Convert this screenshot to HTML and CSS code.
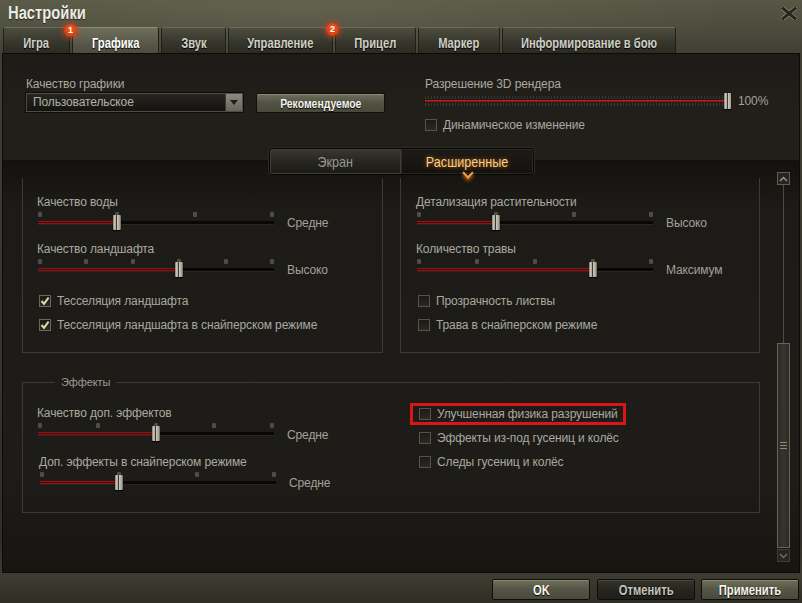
FILE: index.html
```html
<!DOCTYPE html>
<html lang="ru">
<head>
<meta charset="utf-8">
<title>Настройки</title>
<link rel="stylesheet" href="styles.css">
</head>
<body>
<div class="window">
  <header class="titlebar">
    <h1 class="title"><span class="cn">Настройки</span></h1>
    <button class="close" aria-label="Закрыть">
      <svg width="16" height="13" viewBox="0 0 16 13">
        <path d="M2 1.5 L14 11.5 M14 1.5 L2 11.5" stroke="#9a9a8a" stroke-width="4.2" stroke-linecap="square"/>
        <path d="M2 1.5 L14 11.5 M14 1.5 L2 11.5" stroke="#26261f" stroke-width="3" stroke-linecap="square"/>
      </svg>
    </button>
  </header>
  <nav class="tabs">
    <div class="tab t1"><span class="cn">Игра</span><span class="badge">1</span></div>
    <div class="tab t2 active"><span class="cn">Графика</span></div>
    <div class="tab t3"><span class="cn">Звук</span></div>
    <div class="tab t4"><span class="cn">Управление</span><span class="badge">2</span></div>
    <div class="tab t5"><span class="cn">Прицел</span></div>
    <div class="tab t6"><span class="cn">Маркер</span></div>
    <div class="tab t7"><span class="cn">Информирование в бою</span></div>
  </nav>

  <main class="panel">
    <section class="top">
      <div class="top-left">
        <div class="label">Качество графики</div>
        <div class="select-row">
          <div class="select">Пользовательское<span class="select-arrow"></span></div>
          <button class="btn btn-small"><span class="cn">Рекомендуемое</span></button>
        </div>
      </div>
      <div class="top-right">
        <div class="label">Разрешение 3D рендера</div>
        <div class="render-row">
          <div class="render-slider">
            <span class="render-ticks up"></span>
            <span class="render-track"></span>
            <span class="render-ticks down"></span>
            <span class="thumb render-thumb"></span>
          </div>
          <span class="value">100%</span>
        </div>
        <label class="check dyn"><span class="cb"></span>Динамическое изменение</label>
      </div>
    </section>

    <div class="switch-row">
      <div class="switch">
        <span class="seg"><span class="cn">Экран</span></span>
        <span class="seg on"><span class="cn">Расширенные</span></span>
      </div>
    </div>

    <div class="scroll">
      <div class="scroll-content">
        <div class="grid2">
          <div class="box box-l">
            <div class="group">
              <div class="label">Качество воды</div>
              <div class="slider-row">
                <div class="slider" style="--p:0.3333">
                  <span class="ticks"><i></i><i></i><i></i><i></i></span>
                  <span class="track"></span><span class="fill"></span><span class="thumb"></span>
                </div>
                <span class="value">Средне</span>
              </div>
            </div>
            <div class="group">
              <div class="label">Качество ландшафта</div>
              <div class="slider-row">
                <div class="slider" style="--p:0.6">
                  <span class="ticks"><i></i><i></i><i></i><i></i><i></i><i></i></span>
                  <span class="track"></span><span class="fill"></span><span class="thumb"></span>
                </div>
                <span class="value">Высоко</span>
              </div>
            </div>
            <div class="checks">
              <label class="check"><span class="cb on"><svg width="10" height="10" viewBox="0 0 10 10"><path d="M1.5 5 L4 7.8 L8.6 1.6" fill="none" stroke="#e2d7a8" stroke-width="2"/></svg></span>Тесселяция ландшафта</label>
              <label class="check"><span class="cb on"><svg width="10" height="10" viewBox="0 0 10 10"><path d="M1.5 5 L4 7.8 L8.6 1.6" fill="none" stroke="#e2d7a8" stroke-width="2"/></svg></span>Тесселяция ландшафта в снайперском режиме</label>
            </div>
          </div>
          <div class="box box-r">
            <div class="group">
              <div class="label">Детализация растительности</div>
              <div class="slider-row">
                <div class="slider" style="--p:0.3333">
                  <span class="ticks"><i></i><i></i><i></i><i></i></span>
                  <span class="track"></span><span class="fill"></span><span class="thumb"></span>
                </div>
                <span class="value">Высоко</span>
              </div>
            </div>
            <div class="group">
              <div class="label">Количество травы</div>
              <div class="slider-row">
                <div class="slider" style="--p:0.75">
                  <span class="ticks"><i></i><i></i><i></i><i></i><i></i></span>
                  <span class="track"></span><span class="fill"></span><span class="thumb"></span>
                </div>
                <span class="value">Максимум</span>
              </div>
            </div>
            <div class="checks">
              <label class="check"><span class="cb"></span>Прозрачность листвы</label>
              <label class="check"><span class="cb"></span>Трава в снайперском режиме</label>
            </div>
          </div>
        </div>

        <fieldset class="box effects">
          <legend>Эффекты</legend>
          <div class="effects-grid">
            <div class="effects-left">
              <div class="group">
                <div class="label">Качество доп. эффектов</div>
                <div class="slider-row">
                  <div class="slider" style="--p:0.5">
                    <span class="ticks"><i></i><i></i><i></i><i></i><i></i></span>
                    <span class="track"></span><span class="fill"></span><span class="thumb"></span>
                  </div>
                  <span class="value">Средне</span>
                </div>
              </div>
              <div class="group shifted">
                <div class="label">Доп. эффекты в снайперском режиме</div>
                <div class="slider-row">
                  <div class="slider" style="--p:0.3333">
                    <span class="ticks"><i></i><i></i><i></i><i></i></span>
                    <span class="track"></span><span class="fill"></span><span class="thumb"></span>
                  </div>
                  <span class="value">Средне</span>
                </div>
              </div>
            </div>
            <div class="checks effects-checks">
              <label class="check highlight"><span class="cb"></span>Улучшенная физика разрушений</label>
              <label class="check"><span class="cb"></span>Эффекты из-под гусениц и колёс</label>
              <label class="check"><span class="cb"></span>Следы гусениц и колёс</label>
            </div>
          </div>
        </fieldset>
      </div>

      <div class="scrollbar">
        <span class="sb-btn"><svg width="9" height="6" viewBox="0 0 9 6"><path d="M1 5 L4.5 1.5 L8 5" fill="none" stroke="#9a9a8c" stroke-width="1.4"/></svg></span>
        <span class="sb-line"></span>
        <span class="sb-thumb"><span class="grip"></span></span>
        <span class="sb-btn down"><svg width="9" height="6" viewBox="0 0 9 6"><path d="M1 1 L4.5 4.5 L8 1" fill="none" stroke="#6e6e62" stroke-width="1.4"/></svg></span>
      </div>
    </div>
  </main>

  <footer class="footer">
    <button class="btn btn-main"><span class="cn">OK</span></button>
    <button class="btn btn-dark"><span class="cn">Отменить</span></button>
    <button class="btn btn-main"><span class="cn">Применить</span></button>
  </footer>
</div>
</body>
</html>
```

FILE: styles.css
```css
* { box-sizing: border-box; }
html, body { margin: 0; padding: 0; }
body {
  width: 802px;
  height: 603px;
  overflow: hidden;
  background: #3b3b30;
  font-family: "Liberation Sans", Arial, sans-serif;
  font-size: 12px;
  letter-spacing: -0.12px;
  color: #a9a9a1;
}
.cn {
  display: inline-block;
  transform: scaleX(0.8);
  white-space: nowrap;
  letter-spacing: 0;
}
.window {
  width: 802px;
  height: 603px;
  display: flex;
  flex-direction: column;
  background:
    radial-gradient(ellipse 420px 60px at 300px 10px, rgba(120,120,95,0.35), rgba(0,0,0,0)),
    linear-gradient(180deg, #575746 0px, #4c4c3d 30px, #3f3f33 53px, #2f2f27 540px, #3c3c31 575px, #2e2e26 603px);
}
.titlebar {
  height: 27px;
  display: flex;
  align-items: flex-start;
  justify-content: space-between;
  padding: 3px 4px 0 8px;
}
.title {
  margin: 0;
  font-family: "Liberation Sans", Arial, sans-serif;
  font-weight: bold;
  font-size: 18px;
  line-height: 21px;
  color: #ecece4;
  text-shadow: 0 1px 1px rgba(0,0,0,0.6);
}
.title .cn { transform-origin: 0 50%; transform: scaleX(0.82); }
.close {
  margin-top: 3px;
  padding: 0;
  border: 0;
  background: none;
  width: 18px;
  height: 14px;
  display: flex;
  align-items: center;
  justify-content: center;
}

/* tabs */
.tabs {
  height: 26px;
  display: flex;
  gap: 2px;
  padding-left: 3px;
}
.tab {
  position: relative;
  height: 26px;
  display: flex;
  align-items: center;
  justify-content: center;
  padding-top: 4px;
  border: 1px solid #1f1f19;
  border-bottom: 0;
  border-top-color: #6c6c5a;
  border-radius: 3px 3px 0 0;
  background: linear-gradient(180deg, #4d4d3f, #35352b 60%, #2b2b23);
  font-family: "Liberation Sans", Arial, sans-serif;
  font-weight: bold;
  font-size: 14px;
  color: #cfcfc6;
  text-shadow: 0 1px 1px #000;
}
.tab.active {
  background: linear-gradient(180deg, #6e6e5c, #59594a 60%, #4c4c3f);
  border-top-color: #8a8a74;
  color: #ffffff;
}
.t1 { width: 67px; }
.t2 { width: 87px; }
.t3 { width: 65px; }
.t4 { width: 105px; }
.t5 { width: 81px; }
.t6 { width: 82px; }
.t7 { width: 174px; }
.badge {
  position: absolute;
  top: -4px;
  right: -8px;
  width: 13px;
  height: 13px;
  border-radius: 50%;
  background: radial-gradient(circle at 50% 40%, #f05a20, #c8320c);
  box-shadow: 0 0 5px 2px rgba(230,60,20,0.55);
  color: #fff;
  font-family: "Liberation Sans", sans-serif;
  font-size: 9px;
  line-height: 13px;
  text-align: center;
  font-weight: bold;
  text-shadow: none;
  letter-spacing: 0;
  z-index: 2;
}
.t4 .badge { right: -7px; top: -5px; }

/* main panel */
.panel {
  margin-left: 2px;
  width: 798px;
  height: 520px;
  border: 1px solid #0b0b09;
  box-shadow: inset 1px 0 0 #3c3b33, inset -2px 0 0 #3a3930;
  background: #1e1d19;
  display: flex;
  flex-direction: column;
}
.top {
  height: 94px;
  display: grid;
  grid-template-columns: 399px 1fr;
  padding: 23px 0 0 23px;
  background: linear-gradient(180deg, #1c1b17, #221f1a 60%, #211f1a);
}
.label {
  line-height: 14px;
  height: 14px;
  color: #aaa9a0;
  white-space: nowrap;
}
.select-row {
  margin-top: 2px;
  display: flex;
  align-items: flex-start;
  gap: 13px;
}
.select {
  width: 217px;
  height: 19px;
  border: 1px solid #4e4d45;
  background: linear-gradient(180deg, #262520, #141310);
  color: #b2b1a9;
  font-size: 12px;
  line-height: 17px;
  padding-left: 6px;
  display: flex;
  justify-content: space-between;
  box-shadow: 0 0 0 1px #0d0d0b;
}
.select-arrow {
  width: 17px;
  height: 17px;
  background: linear-gradient(180deg, #8a8a80, #66665d);
  border-left: 1px solid #3a3a34;
  position: relative;
}
.select-arrow::after {
  content: "";
  position: absolute;
  left: 4px;
  top: 6px;
  border-left: 4.5px solid transparent;
  border-right: 4.5px solid transparent;
  border-top: 5px solid #1f1f1a;
}
.btn {
  font-family: "Liberation Sans", Arial, sans-serif;
  font-weight: bold;
  border-radius: 2px;
  cursor: default;
  padding: 0;
}
.btn-small {
  width: 129px;
  height: 20px;
  font-size: 13px;
  color: #f4f4ec;
  border: 1px solid #101010;
  background: linear-gradient(180deg, #6f6f5d, #525244 50%, #48483b);
  box-shadow: inset 0 1px 0 #8a8a75;
  text-shadow: 0 1px 1px #000;
}
.render-row {
  margin-top: 2px;
  height: 16px;
  display: flex;
  align-items: center;
  gap: 8px;
}
.render-slider {
  position: relative;
  width: 305px;
  height: 16px;
}
.render-ticks {
  position: absolute;
  left: 0;
  right: 0;
  height: 3px;
  background: repeating-linear-gradient(90deg, #3a3832 0 1px, transparent 1px 3px);
}
.render-ticks.up { top: 3px; }
.render-ticks.down { top: 10px; }
.render-track {
  position: absolute;
  left: 0;
  right: 0;
  top: 7px;
  height: 2px;
  background: linear-gradient(180deg, #d22020, #7a1010);
}
.value {
  color: #a2a199;
  white-space: nowrap;
  line-height: 14px;
}
.check {
  display: flex;
  align-items: center;
  gap: 6px;
  height: 16px;
  line-height: 16px;
  color: #a9a89f;
  white-space: nowrap;
}
.check.dyn { margin-top: 8px; }
.cb {
  width: 12px;
  height: 12px;
  flex: 0 0 12px;
  border: 1px solid #55544b;
  background: linear-gradient(180deg, #1b1a16, #2a2924);
  display: flex;
  align-items: center;
  justify-content: center;
}
.cb.on { border-color: #6a675a; }

/* segmented switch */
.switch-row {
  height: 27px;
  display: flex;
  justify-content: center;
  background: linear-gradient(180deg, #211f1a 0 12px, #121110 12px, #161512 27px);
}
.switch {
  width: 265px;
  height: 27px;
  display: flex;
  border: 1px solid #050504;
  border-radius: 3px;
  box-shadow: 0 0 0 1px #2c2b25;
}
.seg {
  flex: 1;
  display: flex;
  align-items: center;
  justify-content: center;
  font-family: "Liberation Sans", Arial, sans-serif;
  font-size: 15px;
  color: #97968c;
  background: linear-gradient(180deg, #37362f, #25241f 55%, #1b1a16);
  border-radius: 2px 0 0 2px;
  border: 1px solid #403f37;
}
.seg .cn { transform: scaleX(0.84); }
.seg.on {
  position: relative;
  color: #f6cd85;
  text-shadow: 0 0 5px rgba(230,120,20,0.8);
  background: linear-gradient(180deg, #1d1b17, #14120f);
  border-color: #2a2822;
  border-radius: 0 2px 2px 0;
}
.seg.on::after {
  content: "";
  position: absolute;
  left: 50%;
  bottom: -4px;
  width: 6px;
  height: 6px;
  margin-left: -3px;
  border-right: 2px solid #f0a040;
  border-bottom: 2px solid #f0a040;
  transform: rotate(45deg);
  box-shadow: 2px 2px 4px rgba(240,120,20,0.7);
}

/* scroll area */
.scroll {
  height: 397px;
  display: flex;
  background: linear-gradient(180deg, #151411 0px, #1c1b17 30px, #1d1c18 300px, #161511 397px);
}
.scroll-content {
  width: 738px;
  margin-left: 19px;
  padding-top: 3px;
}
.grid2 {
  display: grid;
  grid-template-columns: 361px 360px;
  gap: 17px;
  height: 175px;
}
.box {
  border: 1px solid #3b3a33;
  border-top: 0;
}
.box-l { padding: 17px 0 0 14px; }
.box-r { padding: 17px 0 0 15px; }
.group { margin-bottom: 12px; }
.slider-row {
  display: flex;
  align-items: flex-start;
  gap: 13px;
  padding-left: 1px;
}
.slider-row .value { margin-top: 7px; }
.slider {
  position: relative;
  width: 236px;
  height: 21px;
  flex: 0 0 236px;
}
.ticks {
  position: absolute;
  top: 3px;
  left: 0;
  right: 0;
  display: flex;
  justify-content: space-between;
}
.ticks i {
  width: 4px;
  height: 5px;
  background: #4d4c46;
  border-radius: 1px;
}
.track {
  position: absolute;
  left: 0;
  right: 0;
  top: 12px;
  height: 3px;
  background: #070706;
  box-shadow: 0 1px 0 #2a2520;
}
.fill {
  position: absolute;
  left: 0;
  top: 12px;
  height: 3px;
  width: calc(var(--p) * 232px + 2px);
  background: linear-gradient(180deg, #b81a1a, #4a0808 50%, #b01818);
}
.thumb {
  position: absolute;
  top: 6px;
  left: calc(var(--p) * 232px - 2px);
  width: 8px;
  height: 15px;
  border-radius: 1px;
  background: linear-gradient(90deg, #5a5650 0, #cfc9be 1px, #a9a398 3px, #3d3a35 3px, #3d3a35 4px, #cfc9be 4px, #a09a8f 7px, #55514b 8px);
  box-shadow: 0 1px 1px #000;
}
.render-thumb { left: 299px; top: 0; height: 16px; width: 7px; }
.checks {
  margin-top: 16px;
  display: flex;
  flex-direction: column;
  gap: 8px;
  padding-left: 2px;
}

/* effects */
fieldset.effects {
  margin: 22px 0 0 0;
  padding: 17px 0 0 14px;
  border: 1px solid #3b3a33;
  height: 138px;
  min-width: 0;
}
.effects legend {
  margin-left: 18px;
  padding: 0 6px;
  font-size: 11px;
  line-height: 14px;
  color: #9c9b92;
}
.effects-grid {
  display: grid;
  grid-template-columns: 379px 1fr;
}
.effects .group { margin-bottom: 13px; }
.effects .group.shifted { padding-left: 2px; }
.effects .slider-row .value { margin-top: 8px; }
.effects .group.shifted .value { margin-top: 7px; }
.effects-checks {
  margin-top: 0;
  padding-left: 3px;
}
.highlight { position: relative; align-self: flex-start; }
.highlight::after {
  content: "";
  position: absolute;
  top: -3px;
  bottom: -3px;
  left: -9px;
  right: -8px;
  border: 3px solid #d81616;
}

/* scrollbar */
.scrollbar {
  width: 13px;
  margin: -3px 0 10px 17px;
  display: flex;
  flex-direction: column;
  align-items: center;
}
.sb-btn {
  width: 13px;
  height: 13px;
  flex: 0 0 13px;
  border: 1px solid #5f5e54;
  background: #262520;
  display: flex;
  align-items: center;
  justify-content: center;
}
.sb-btn.down { border-color: #3e3d36; margin-top: 1px; }
.sb-line {
  flex: 1;
  width: 1px;
  background: #4c4b43;
}
.sb-thumb {
  width: 13px;
  height: 205px;
  flex: 0 0 205px;
  border: 1px solid #66655a;
  background: linear-gradient(90deg, #2b2a25, #35342e 50%, #2b2a25);
  display: flex;
  align-items: center;
  justify-content: center;
}
.grip {
  width: 7px;
  height: 7px;
  background: linear-gradient(180deg, #8c8b80 0 1px, transparent 1px 3px, #8c8b80 3px 4px, transparent 4px 6px, #8c8b80 6px 7px);
}

/* footer */
.footer {
  height: 30px;
  display: flex;
  justify-content: flex-end;
  align-items: flex-start;
  gap: 7px;
  padding: 6px 3px 0 0;
}
.btn-main, .btn-dark {
  width: 98px;
  height: 21px;
  font-size: 14px;
  border: 1px solid #0e0e0c;
}
.btn-main {
  color: #f4f4ea;
  background: linear-gradient(180deg, #6e6e5b, #555546 50%, #4a4a3d);
  box-shadow: inset 0 1px 0 #88886f;
  text-shadow: 0 1px 1px #000;
}
.btn-dark {
  color: #c4c4ba;
  background: linear-gradient(180deg, #34332c, #26251f 50%, #1f1e1a);
  box-shadow: inset 0 1px 0 #4a4940;
  text-shadow: 0 1px 1px #000;
}
.footer .btn-dark + .btn-main { margin-left: -1px; }
```
